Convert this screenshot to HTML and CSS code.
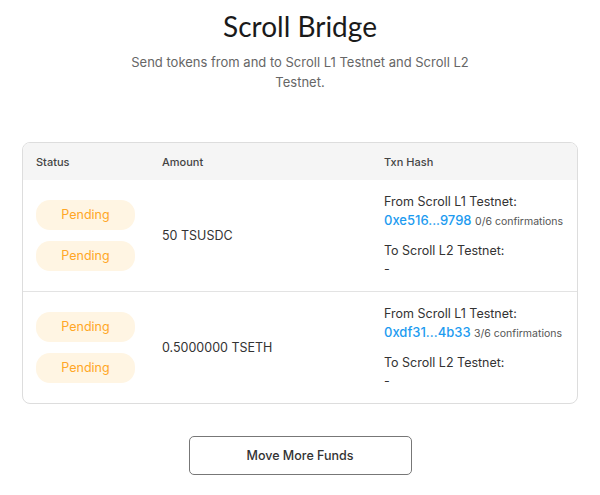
FILE: index.html
```html
<!DOCTYPE html>
<html lang="en">
<head>
  <meta charset="UTF-8">
  <title>Scroll Bridge</title>
  <link rel="stylesheet" href="styles.css">
</head>
<body>
  <div class="page">
    <h1>Scroll Bridge</h1>
    <p class="subtitle">Send tokens from and to Scroll L1 Testnet and Scroll L2<br>Testnet.</p>

    <div class="card">
      <table class="txns">
        <thead>
          <tr>
            <th class="col-status">Status</th>
            <th class="col-amount">Amount</th>
            <th>Txn Hash</th>
          </tr>
        </thead>
        <tbody>
          <tr>
            <td>
              <div class="badge">Pending</div>
              <div class="badge">Pending</div>
            </td>
            <td>50 TSUSDC</td>
            <td>
              <div class="hop">
                <div>From Scroll L1 Testnet:</div>
                <div><a class="hash" href="#">0xe516...9798</a> <span class="conf">0/6 confirmations</span></div>
              </div>
              <div class="hop">
                <div>To Scroll L2 Testnet:</div>
                <div>-</div>
              </div>
            </td>
          </tr>
          <tr>
            <td>
              <div class="badge">Pending</div>
              <div class="badge">Pending</div>
            </td>
            <td>0.5000000 TSETH</td>
            <td>
              <div class="hop">
                <div>From Scroll L1 Testnet:</div>
                <div><a class="hash" href="#">0xdf31...4b33</a> <span class="conf">3/6 confirmations</span></div>
              </div>
              <div class="hop">
                <div>To Scroll L2 Testnet:</div>
                <div>-</div>
              </div>
            </td>
          </tr>
        </tbody>
      </table>
    </div>

    <button class="more" type="button">Move More Funds</button>
  </div>
</body>
</html>
```

FILE: styles.css
```css
/* page */
body {
  margin: 0;
  background: #fff;
  font-family: 'Inter', 'Liberation Sans', sans-serif;
  color: #333;
}

.page {
  display: flex;
  flex-direction: column;
  align-items: center;
  padding: 0 23px;
}

h1 {
  margin: 9px 0 0;
  font-family: 'Lato', sans-serif;
  font-weight: 400;
  font-size: 28px;
  line-height: 34px;
  color: #1a1a1a;
}

.subtitle {
  margin: 9px 0 0;
  font-size: 13px;
  line-height: 20px;
  color: #666;
  text-align: center;
}

/* table card */
.card {
  margin-top: 50px;
  width: 100%;
  border: 1px solid #ddd;
  border-radius: 8px;
  overflow: hidden;
}

.txns {
  width: 100%;
  border-collapse: collapse;
  font-size: 12.5px;
}

.txns th {
  background: #f5f5f5;
  text-align: left;
  font-weight: 500;
  font-size: 11px;
  color: #444;
  height: 37px;
  padding: 0 13px;
}

.col-status { width: 100px; }
.col-amount { width: 196px; }

.txns td {
  padding: 13px 13px;
  vertical-align: middle;
  color: #333;
}

.txns tbody tr + tr td {
  border-top: 1px solid #e3e3e3;
}

.badge {
  width: 99px;
  height: 30px;
  line-height: 30px;
  border-radius: 14px;
  background: #fff5e3;
  color: #ffa726;
  text-align: center;
  font-size: 12.5px;
}

.badge + .badge {
  margin-top: 11px;
}

.hop {
  line-height: 18px;
}

.hop + .hop {
  margin-top: 11px;
}

.hash {
  color: #1d9bf0;
  text-decoration: none;
  font-weight: 500;
  font-size: 13px;
}

.conf {
  font-size: 10.5px;
  color: #555;
}

.more {
  margin-top: 32px;
  width: 223px;
  height: 39px;
  background: #fff;
  border: 1px solid #777;
  border-radius: 5px;
  font-family: inherit;
  font-size: 12.5px;
  font-weight: 500;
  color: #333;
}
```
